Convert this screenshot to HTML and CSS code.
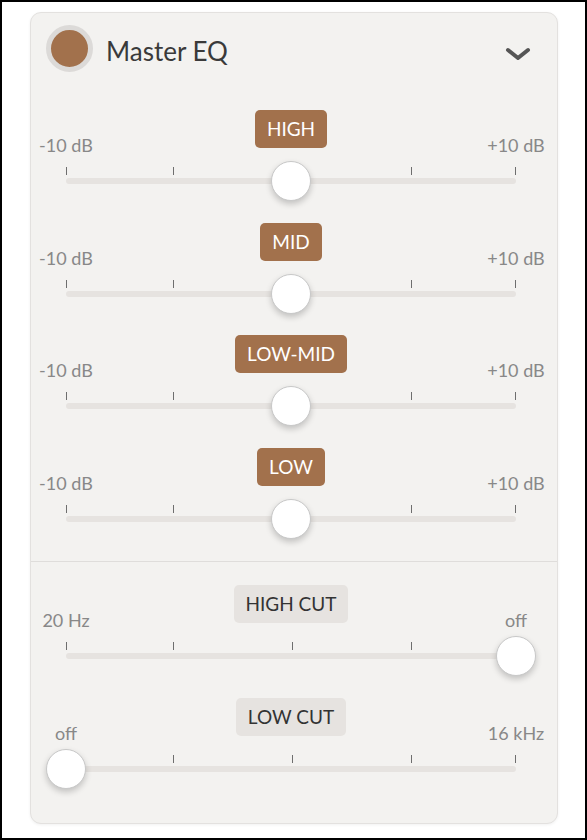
FILE: index.html
```html
<!DOCTYPE html>
<html lang="en">
<head>
  <meta charset="UTF-8" />
  <meta name="viewport" content="width=device-width, initial-scale=1.0"/>
  <title>Master EQ</title>
  <link rel="stylesheet" href="styles.css">
</head>
<body>
  <div class="frame">
    <div class="card">

      <div class="header">
        <span class="dot"></span>
        <span class="title">Master EQ</span>
        <svg class="chevron" width="26" height="14" viewBox="0 0 26 14">
          <polyline points="3,3 13,11 23,3" fill="none" stroke="#555" stroke-width="4" stroke-linecap="round" stroke-linejoin="round"/>
        </svg>
      </div>

      <div class="bands">
        <div class="slider">
          <div class="head">
            <span class="end">-10 dB</span>
            <span class="pill">HIGH</span>
            <span class="end">+10 dB</span>
          </div>
          <div class="rail">
            <div class="ticks"><i></i><i></i><i></i><i></i></div>
            <div class="track"><span class="knob" style="left: 50%"></span></div>
          </div>
        </div>

        <div class="slider">
          <div class="head">
            <span class="end">-10 dB</span>
            <span class="pill">MID</span>
            <span class="end">+10 dB</span>
          </div>
          <div class="rail">
            <div class="ticks"><i></i><i></i><i></i><i></i></div>
            <div class="track"><span class="knob" style="left: 50%"></span></div>
          </div>
        </div>

        <div class="slider">
          <div class="head">
            <span class="end">-10 dB</span>
            <span class="pill">LOW-MID</span>
            <span class="end">+10 dB</span>
          </div>
          <div class="rail">
            <div class="ticks"><i></i><i></i><i></i><i></i></div>
            <div class="track"><span class="knob" style="left: 50%"></span></div>
          </div>
        </div>

        <div class="slider">
          <div class="head">
            <span class="end">-10 dB</span>
            <span class="pill">LOW</span>
            <span class="end">+10 dB</span>
          </div>
          <div class="rail">
            <div class="ticks"><i></i><i></i><i></i><i></i></div>
            <div class="track"><span class="knob" style="left: 50%"></span></div>
          </div>
        </div>
      </div>

      <div class="cuts">
        <div class="slider">
          <div class="head">
            <span class="end">20 Hz</span>
            <span class="pill pill-off">HIGH CUT</span>
            <span class="end">off</span>
          </div>
          <div class="rail">
            <div class="ticks"><i></i><i></i><i></i><i></i></div>
            <div class="track"><span class="knob" style="left: 100%"></span></div>
          </div>
        </div>

        <div class="slider">
          <div class="head">
            <span class="end">off</span>
            <span class="pill pill-off">LOW CUT</span>
            <span class="end">16 kHz</span>
          </div>
          <div class="rail">
            <div class="ticks"><i></i><i></i><i></i><i></i></div>
            <div class="track"><span class="knob" style="left: 0%"></span></div>
          </div>
        </div>
      </div>

    </div>
  </div>
</body>
</html>
```

FILE: styles.css
```css
* {
  box-sizing: border-box;
}

body {
  margin: 0;
  background: #fff;
  font-family: Lato, 'Open Sans', sans-serif;
  color: #333;
}

.frame {
  width: 587px;
  height: 840px;
  border: 2px solid #000;
  padding: 10px 0 0 28px;
}

.card {
  width: 528px;
  background: #f3f2f0;
  border: 1px solid #e3e1df;
  border-radius: 11px;
  box-shadow: 0 1px 3px rgba(0,0,0,0.06);
}

/* header */
.header {
  display: flex;
  align-items: center;
  height: 48px;
  margin-top: 11px;
  padding: 0 26px 0 15px;
}

.dot {
  width: 47px;
  height: 47px;
  border-radius: 50%;
  background: #a2714c;
  border: 5px solid #dcdad8;
  flex: none;
}

.title {
  margin: 5px 0 0 13px;
  font-size: 26px;
  color: #3a3a3a;
}

.chevron {
  margin: 11px 0 0 auto;
}

/* sliders */
.bands {
  padding: 38px 11px 39.5px 5px;
  display: flex;
  flex-direction: column;
  gap: 38.5px;
}

.cuts {
  border-top: 1px solid #dfdddb;
  padding: 23px 11px 51px 5px;
  display: flex;
  flex-direction: column;
  gap: 39px;
}

.head {
  display: flex;
  justify-content: space-between;
  align-items: flex-end;
  height: 38px;
}

.end {
  width: 80px;
  margin: 0 -10px -8px;
  text-align: center;
  white-space: nowrap;
  font-size: 18px;
  line-height: 22px;
  color: #888;
}

.pill {
  height: 38px;
  line-height: 38px;
  padding: 0 12px;
  border-radius: 5px;
  font-size: 19px;
  background: #a2714c;
  color: #fff;
}

.pill-off {
  background: #e6e3e0;
  color: #333;
}

.rail {
  margin-top: 19px;
  height: 17px;
}

.ticks {
  display: grid;
  grid-template-columns: 107fr 119fr 119fr 105fr;
  height: 8px;
  margin: 0 30px;
}

.ticks i {
  border-left: 1px solid #6e6e6e;
}

.ticks i:last-child {
  border-right: 1px solid #6e6e6e;
}

.track {
  position: relative;
  height: 6px;
  margin: 3px 30px 0;
  background: #e6e3e0;
  border-radius: 3px;
}

.knob {
  position: absolute;
  top: -17px;
  width: 40px;
  height: 40px;
  margin-left: -20px;
  border-radius: 50%;
  background: #fff;
  border: 1.5px solid #c8c8c8;
  box-shadow: 0 3px 6px rgba(0,0,0,0.2);
}
```
